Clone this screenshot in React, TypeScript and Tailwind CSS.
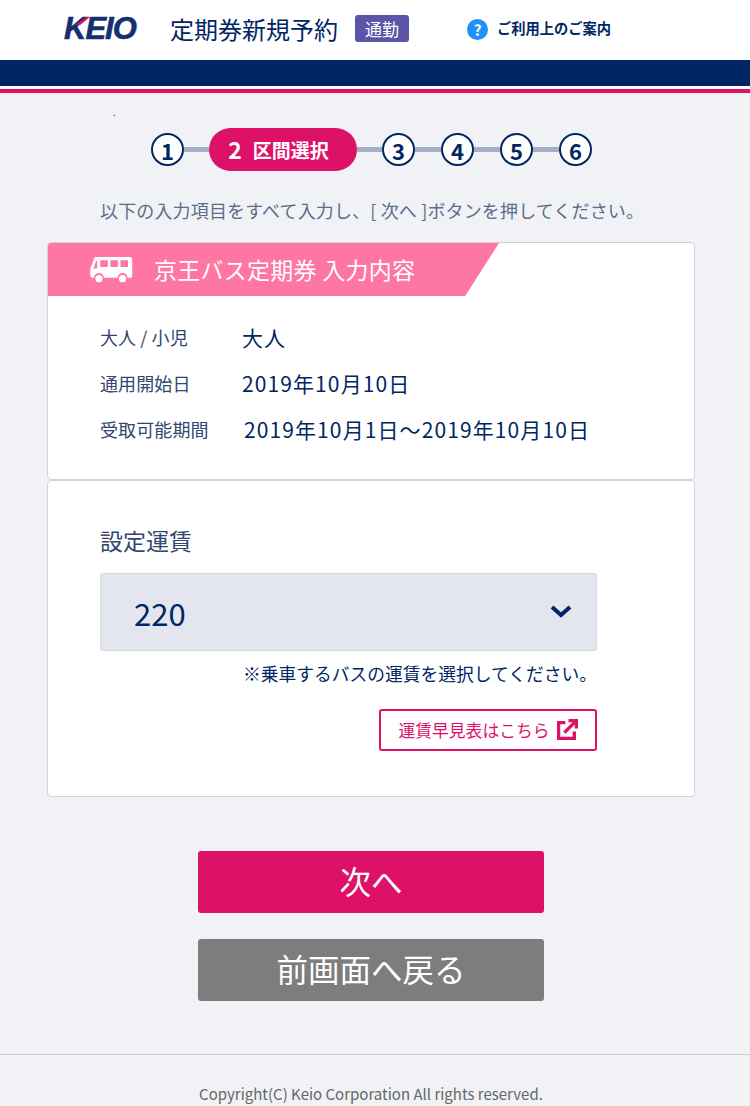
import React from "react";

const jp = "font-['Noto_Sans_CJK_JP','Noto_Sans',sans-serif]";

function Circle({ n }: { n: number }) {
  return (
    <div className="w-[33px] h-[33px] rounded-full border-2 border-[#002663] bg-white flex items-center justify-center text-[#002663] text-[22px] font-bold leading-none shrink-0">
      {n}
    </div>
  );
}

function Line({ w }: { w: string }) {
  return <div className={`${w} h-[5px] bg-[#a3b0c8] shrink-0`} />;
}

function Bus() {
  return (
    <svg width="43" height="27" viewBox="0 0 44 28" fill="#fff">
      <path fillRule="evenodd" d="M6 1h35c1.500 0 2.500 1 2.500 2.500V21c0 1-.5 1.500-1.500 1.500h-3.500a5 5 0 0 0-10 0H14a5 5 0 0 0-10 0H2c-1 0-2-1-2-2v-7c0-1 .5-2 1-3L4 2.500C4.500 1.500 5 1 6 1zM7 5v8H3.500L6 5h1zM11.500 4.500h5.500c.8 0 1.200.4 1.200 1.200v4.600c0 .8-.4 1.200-1.200 1.200h-5.500c-.8 0-1.200-.4-1.200-1.200V5.700c0-.8.4-1.200 1.200-1.200zM22 4.500h5.500c.8 0 1.200.4 1.200 1.200v4.600c0 .8-.4 1.200-1.200 1.200H22c-.8 0-1.200-.4-1.200-1.200V5.700c0-.8.4-1.200 1.200-1.200zM32.500 4.500H38c.8 0 1.200.4 1.200 1.200v4.600c0 .8-.4 1.200-1.200 1.200h-5.500c-.8 0-1.200-.4-1.200-1.200V5.700c0-.8.4-1.200 1.200-1.200z" />
      <circle cx="9" cy="23.500" r="3.700" />
      <circle cx="33.500" cy="23.500" r="3.700" />
    </svg>
  );
}

function InfoRow({ label, value, valueClass, rowClass }: { label: string; value: string; valueClass: string; rowClass: string }) {
  return (
    <div className={`flex items-center ${rowClass}`}>
      <div className="w-[142px] text-[18px] tracking-[0.1px] text-[#33466f] leading-none shrink-0 whitespace-nowrap">{label}</div>
      <div className={`text-[21px] tracking-[1.1px] text-[#002663] leading-none whitespace-nowrap ${valueClass}`}>{value}</div>
    </div>
  );
}

export default function App() {
  return (
    <div className={`w-[750px] h-[1106px] overflow-hidden bg-[#f0f2f6] flex flex-col ${jp}`}>
      <header className="h-[60px] bg-white flex items-center shrink-0 pl-[64px]">
        <div className="relative w-[72px] h-[24px] mb-[3px] shrink-0 flex items-center">
          <span className="font-['Liberation_Sans',sans-serif] italic font-bold text-[31px] leading-none text-[#14306e] tracking-[-1px] [-webkit-text-stroke:0.6px_#14306e]">KEIO</span>
          <svg className="absolute left-[8px] top-0" width="18" height="10" viewBox="0 0 18 10">
            <path d="M15 0h3L8 8H3z" fill="#de1169" />
          </svg>
        </div>
        <div className="ml-[34px] text-[24px] text-[#002663] leading-none whitespace-nowrap mb-[3px]">定期券新規予約</div>
        <div className="ml-[17px] w-[54px] h-[27px] rounded-[3px] bg-[#5b54a8] text-white text-[17px] flex items-center justify-center leading-none mb-[3px]">通勤</div>
        <div className="ml-[58px] w-[21px] h-[21px] rounded-full bg-[#2191f5] text-white text-[15px] font-bold flex items-center justify-center leading-none mb-[2px]">?</div>
        <div className="ml-[9px] text-[14.250px] font-bold text-[#002663] leading-none whitespace-nowrap mb-[3px]">ご利用上のご案内</div>
      </header>
      <div className="h-[26px] bg-[#002663] shrink-0" />
      <div className="h-[3px] bg-white shrink-0" />
      <div className="h-[4px] bg-[#de1169] shrink-0" />

      <main className="relative flex flex-col flex-1 w-[742px]">
        <span className="absolute left-[113px] top-[14px] text-[10px] leading-none text-[#333]">.</span>
        <div className="mt-[35px] h-[43px] flex items-center pl-[151px]">
          <Circle n={1} />
          <Line w="w-[25px]" />
          <div className="w-[148px] h-[43px] rounded-[22px] bg-[#de1169] text-white font-bold text-[19px] flex items-center justify-center leading-none shrink-0 pr-[9px]">
            <span className="mr-[11px] text-[23px]">2</span>区間選択
          </div>
          <Line w="w-[25px]" />
          <Circle n={3} />
          <Line w="w-[26px]" />
          <Circle n={4} />
          <Line w="w-[26px]" />
          <Circle n={5} />
          <Line w="w-[26px]" />
          <Circle n={6} />
        </div>
        <p className="mt-[27px] pl-[100px] text-[#5c6c8a] text-[18px] tracking-[0.15px] leading-[24px] whitespace-nowrap">
          以下の入力項目をすべて入力し、[ 次へ ]ボタンを押してください。
        </p>

        <section className="mt-[20px] mx-[47px] h-[238px] bg-white border border-[#d0d3d8] rounded-[4px] overflow-hidden shrink-0">
          <div className="h-[53px] w-[451px] bg-[#fe76a2] [clip-path:polygon(0_0,100%_0,92.500%_100%,0_100%)] flex items-center pl-[42px]">
            <Bus />
            <span className="ml-[21px] text-white text-[23px] tracking-[0.25px] leading-none whitespace-nowrap">京王バス定期券 入力内容</span>
          </div>
          <div className="pl-[52px] pt-[28px]">
            <InfoRow label="大人 / 小児" value="大人" valueClass="" rowClass="h-[26px]" />
            <InfoRow label="通用開始日" value="2019年10月10日" valueClass="" rowClass="h-[26px] mt-[20px]" />
            <InfoRow label="受取可能期間" value="2019年10月1日～2019年10月10日" valueClass="ml-[2px]" rowClass="h-[26px] mt-[20px]" />
          </div>
        </section>

        <section className="mx-[47px] h-[317px] bg-white border border-[#d0d3d8] rounded-[4px] shrink-0 pl-[52px] pr-[97px] pt-[44px]">
          <div className="text-[#33466f] text-[23px] leading-[30px]">設定運賃</div>
          <div className="mt-[18px] h-[78px] bg-[#e3e6ef] border border-[#d3d9e5] rounded-[3px] flex items-center justify-between pl-[33px] pr-[24px]">
            <span className="text-[#002663] text-[31px] leading-none">220</span>
            <svg width="22" height="14" viewBox="0 0 22 14" fill="none" stroke="#002663" strokeWidth="4" className="mb-[3px]">
              <path d="M2 3l9 8 9-8" />
            </svg>
          </div>
          <p className="mt-[9px] text-right text-[#002663] text-[17.750px] leading-[26px] whitespace-nowrap">※乗車するバスの運賃を選択してください。</p>
          <div className="mt-[23px] flex justify-end">
            <div className="w-[218px] h-[42px] border-2 border-[#de1169] rounded-[3px] flex items-center justify-center text-[#de1169] text-[16.800px] leading-none whitespace-nowrap">
              運賃早見表はこちら
              <svg width="21" height="21" viewBox="0 0 20 20" fill="none" stroke="#de1169" strokeWidth="3.200" className="ml-[7px] mb-[2px]">
                <path d="M8 3.500H1.500v15h15V12" />
                <path d="M7 13L18 2M11 1.500h7.500V9" />
              </svg>
            </div>
          </div>
        </section>

        <button className="mt-[54px] mx-auto w-[346px] h-[62px] rounded-[3px] bg-[#de1169] text-white text-[31.500px] leading-none flex items-center justify-center pb-[2px] shrink-0">次へ</button>
        <button className="mt-[26px] mx-auto w-[346px] h-[62px] rounded-[3px] bg-[#7d7d7d] text-white text-[31.500px] leading-none flex items-center justify-center pb-[2px] shrink-0">前画面へ戻る</button>

        <footer className="mt-[53px] -mr-[8px] border-t border-[#c9ccd1] pt-[29px] pr-[8px] text-center text-[#666] text-[15px] leading-[20px]">
          Copyright(C) Keio Corporation All rights reserved.
        </footer>
      </main>
    </div>
  );
}
